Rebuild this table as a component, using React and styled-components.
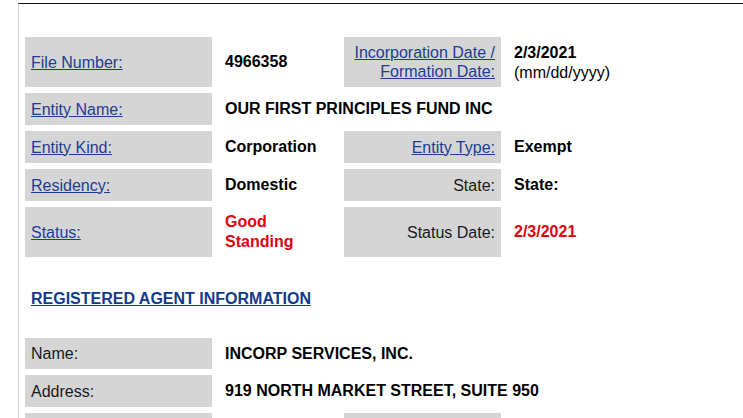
import React from 'react';
import styled, { createGlobalStyle } from 'styled-components';

const GlobalStyle = createGlobalStyle`
  html, body {
    margin: 0;
    padding: 0;
    background: #fff;
    overflow: hidden;
  }
  body {
    font-family: "Liberation Sans", Arial, sans-serif;
    font-size: 16px;
    color: #000;
  }
`;

const Frame = styled.div`
  margin: 3px 0 0 18px;
  min-height: 430px;
  border-top: 1px solid #111;
  border-left: 1px solid #cfcfcf;
  padding: 33px 0 0 6px;
`;

const DetailGrid = styled.div`
  display: grid;
  grid-template-columns: 187px 120px 157px 1fr;
  grid-template-rows: ${(p) => p.$rows};
  column-gap: 6px;
  row-gap: 6px;
`;

const LabelCell = styled.div`
  display: flex;
  align-items: center;
  justify-content: ${(p) => (p.$right ? 'flex-end' : 'flex-start')};
  text-align: ${(p) => (p.$right ? 'right' : 'left')};
  padding: 0 6px;
  background: #d5d5d5;
  color: #1a1a1a;
  line-height: 19px;
`;

const ValueCell = styled.div`
  display: flex;
  flex-direction: column;
  justify-content: center;
  padding: 0 0 0 7px;
  grid-column: ${(p) => (p.$span ? `span ${p.$span}` : 'auto')};
  color: ${(p) => (p.$alert ? '#e2000f' : '#000')};
  font-weight: bold;
  line-height: 20px;
`;

const Hint = styled.span`
  font-weight: normal;
  line-height: 19px;
`;

const LabelLink = styled.a`
  color: #1c3d93;
  text-decoration: underline;
  cursor: pointer;
`;

const SectionTitle = styled.a`
  display: block;
  margin: 32px 0 29px 6px;
  line-height: 20px;
  color: #123a8c;
  font-weight: bold;
  text-decoration: underline;
  cursor: pointer;
`;

export default function App() {
  return (
    <>
      <GlobalStyle />
      <Frame>
        <DetailGrid $rows="50px 32px 32px 32px 50px">
          <LabelCell><LabelLink>File Number:</LabelLink></LabelCell>
          <ValueCell>4966358</ValueCell>
          <LabelCell $right>
            <LabelLink>Incorporation Date /<br />Formation Date:</LabelLink>
          </LabelCell>
          <ValueCell>
            <span>2/3/2021</span>
            <Hint>(mm/dd/yyyy)</Hint>
          </ValueCell>

          <LabelCell><LabelLink>Entity Name:</LabelLink></LabelCell>
          <ValueCell $span={3}>OUR FIRST PRINCIPLES FUND INC</ValueCell>

          <LabelCell><LabelLink>Entity Kind:</LabelLink></LabelCell>
          <ValueCell>Corporation</ValueCell>
          <LabelCell $right><LabelLink>Entity Type:</LabelLink></LabelCell>
          <ValueCell>Exempt</ValueCell>

          <LabelCell><LabelLink>Residency:</LabelLink></LabelCell>
          <ValueCell>Domestic</ValueCell>
          <LabelCell $right>State:</LabelCell>
          <ValueCell>State:</ValueCell>

          <LabelCell><LabelLink>Status:</LabelLink></LabelCell>
          <ValueCell $alert>Good Standing</ValueCell>
          <LabelCell $right>Status Date:</LabelCell>
          <ValueCell $alert>2/3/2021</ValueCell>
        </DetailGrid>

        <SectionTitle>REGISTERED AGENT INFORMATION</SectionTitle>

        <DetailGrid $rows="31px 32px 32px">
          <LabelCell>Name:</LabelCell>
          <ValueCell $span={3}>INCORP SERVICES, INC.</ValueCell>

          <LabelCell>Address:</LabelCell>
          <ValueCell $span={3}>919 NORTH MARKET STREET, SUITE 950</ValueCell>

          <LabelCell />
          <ValueCell />
          <LabelCell $right />
          <ValueCell />
        </DetailGrid>
      </Frame>
    </>
  );
}
